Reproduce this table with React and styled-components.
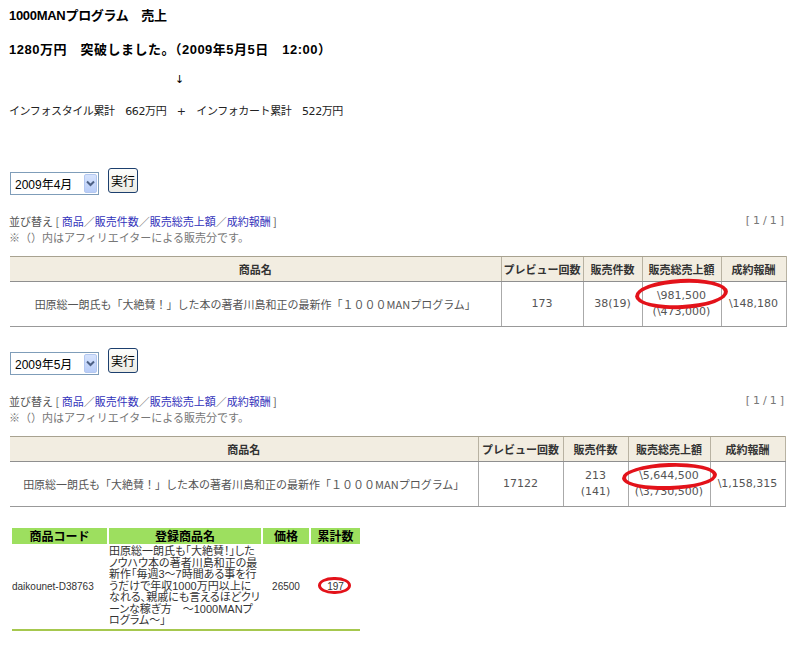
import React from "react";
import styled, { createGlobalStyle } from "styled-components";

const GlobalStyle = createGlobalStyle`
  body {
    margin: 0;
    background: #fff;
    color: #000;
    font-family: "DejaVu Sans", "Noto Sans CJK JP", sans-serif;
  }
`;

const Page = styled.div`
  width: 800px;
  padding: 8px 10px 0 9px;
  box-sizing: border-box;
`;

const Title = styled.p`
  margin: 0 0 ${(p) => p.$gap}px;
  font-family: "Liberation Sans", "Noto Sans CJK JP", sans-serif;
  font-size: 13px;
  font-weight: bold;
  line-height: 16px;
  letter-spacing: ${(p) => p.$spacing}px;
`;

const Arrow = styled.p`
  margin: 0 0 16px;
  padding-left: 166px;
  font-size: 11px;
  line-height: 16px;
`;

const Summary = styled.p`
  margin: 0;
  font-size: 11px;
  line-height: 16px;
  letter-spacing: -0.4px;
  color: #222;
`;

const Controls = styled.div`
  display: flex;
  align-items: flex-start;
  gap: 9px;
  margin: ${(p) => p.$top}px 0 0 1px;
`;

const SelectBox = styled.div`
  width: 89px;
  height: 23px;
  margin-top: 4px;
  box-sizing: border-box;
  border: 1px solid #7f9db9;
  display: flex;
  align-items: center;
  padding-left: 4px;
  font-size: 12px;
  color: #000;
  font-family: "Liberation Sans", "Noto Sans CJK JP", sans-serif;
`;

const DropButton = styled.span`
  margin-left: auto;
  width: 13px;
  height: 19px;
  margin-right: 1px;
  box-sizing: border-box;
  border: 1px solid #b4c8f0;
  border-radius: 2px;
  background: linear-gradient(#d6e3fd, #b9cdf8);
  display: flex;
  align-items: center;
  justify-content: center;
`;

const RunButton = styled.button`
  width: 30px;
  height: 25px;
  padding: 0;
  border: 1px solid #1c3f6e;
  border-radius: 3px;
  background: linear-gradient(#fdfdfb, #ecebe4);
  font-family: "Noto Sans CJK JP", sans-serif;
  font-size: 12px;
  color: #000;
`;

const SortBar = styled.div`
  display: flex;
  justify-content: space-between;
  align-items: flex-start;
  margin-top: 18px;
  padding-right: 3px;
  font-size: 11px;
  line-height: 16px;
  color: #555;
`;

const SortLinks = styled.div`
  display: flex;
  flex-direction: column;
  font-family: "Noto Sans CJK JP", sans-serif;
`;

const Link = styled.a`
  color: #3333bb;
  text-decoration: none;
`;

const Note = styled.span`
  color: #777;
`;

const Pager = styled.span`
  color: #777;
  letter-spacing: 3px;
`;

const DataTable = styled.table`
  margin: 11px 0 0 1px;
  border-collapse: collapse;
  table-layout: fixed;
  width: ${(p) => p.$width}px;
  font-size: 11px;
`;

const HeadCell = styled.th`
  height: 24px;
  padding: 0;
  background: #f2ede1;
  border-top: 1px solid #a8a290;
  border-bottom: 1px solid #8f8f8f;
  border-left: ${(p) => (p.$first ? "none" : "1px solid #b8b2a2")};
  border-right: ${(p) => (p.$last ? "1px solid #b8b2a2" : "none")};
  font-family: "Noto Sans CJK JP", sans-serif;
  font-weight: bold;
  color: #333;
  text-align: center;
`;

const BodyCell = styled.td`
  height: 44px;
  padding: 0;
  border-bottom: 1px solid #999;
  border-left: ${(p) => (p.$first ? "none" : "1px solid #aaa")};
  border-right: ${(p) => (p.$last ? "1px solid #aaa" : "none")};
  text-align: center;
  vertical-align: middle;
  line-height: 16px;
  color: #555;
  white-space: nowrap;
  font-family: ${(p) => (p.$cjk ? '"Noto Sans CJK JP", sans-serif' : "inherit")};
`;

const Ring = styled.span`
  position: relative;
  display: inline-block;
  &::after {
    content: "";
    position: absolute;
    left: -${(p) => p.$l}px;
    right: -${(p) => p.$r}px;
    top: -${(p) => p.$t}px;
    bottom: -${(p) => p.$b}px;
    border: ${(p) => p.$w}px solid #e3121a;
    border-radius: 50%;
    transform: rotate(${(p) => p.$rot}deg);
  }
`;

const CodeTable = styled.table`
  margin: 19px 0 0 1px;
  border-collapse: separate;
  border-spacing: 2px;
  table-layout: fixed;
  width: 352px;
  font-family: "Liberation Sans", "Noto Sans CJK JP", sans-serif;
  font-size: 10px;
  color: #333;
`;

const CodeHead = styled.th`
  height: 16px;
  padding: 0;
  background: #9ddf5f;
  font-family: "Noto Sans CJK JP", sans-serif;
  font-size: 12px;
  line-height: 16px;
  font-weight: bold;
  color: #000;
  text-align: center;
`;

const CodeCell = styled.td`
  padding: 0;
  text-align: ${(p) => p.$align};
  vertical-align: middle;
  font-size: ${(p) => (p.$big ? 11 : 10)}px;
  line-height: 11.5px;
  white-space: nowrap;
  font-feature-settings: "palt";
`;

const FootLine = styled.td`
  height: 2px;
  padding: 0;
  background: #a6c84e;
`;

const productName =
  "田原総一朗氏も「大絶賛！」した本の著者川島和正の最新作「１０００MANプログラム」";

const reports = [
  {
    month: "2009年4月",
    cols: [491, 82, 59, 79, 65],
    preview: "173",
    count: ["38(19)"],
    total: ["\\981,500", "(\\473,000)"],
    reward: "\\148,180",
    ring: { l: 22, r: 22, t: 9, b: 5, rot: -3 },
  },
  {
    month: "2009年5月",
    cols: [468, 85, 65, 82, 75],
    preview: "17122",
    count: ["213", "(141)"],
    total: ["\\5,644,500", "(\\3,730,500)"],
    reward: "\\1,158,315",
    ring: { l: 17, r: 18, t: 5, b: 6, rot: -2 },
  },
];

const headers = ["商品名", "プレビュー回数", "販売件数", "販売総売上額", "成約報酬"];

const descLines = [
  "田原総一朗氏も「大絶賛！」した",
  "ノウハウ本の著者川島和正の最",
  "新作「毎週3～7時間ある事を行",
  "うだけで年収1000万円以上に",
  "なれる、親戚にも言えるほどクリ",
  "ーンな稼ぎ方　～1000MANプ",
  "ログラム～」",
];

function Chevron() {
  return (
    <svg width="9" height="7" viewBox="0 0 9 7">
      <path d="M1 1.5 L4.5 5 L8 1.5" fill="none" stroke="#4d6185" strokeWidth="2" />
    </svg>
  );
}

function Lines({ items }) {
  return items.map((t, i) => (
    <React.Fragment key={i}>
      {i > 0 && <br />}
      {t}
    </React.Fragment>
  ));
}

function Report({ data, top }) {
  const width = data.cols.reduce((a, b) => a + b, 0);
  const { l, r, t, b, rot } = data.ring;
  return (
    <section>
      <Controls $top={top}>
        <SelectBox>
          {data.month}
          <DropButton>
            <Chevron />
          </DropButton>
        </SelectBox>
        <RunButton>実行</RunButton>
      </Controls>
      <SortBar>
        <SortLinks>
          <span>
            並び替え [ <Link>商品</Link>／<Link>販売件数</Link>／<Link>販売総売上額</Link>／
            <Link>成約報酬</Link> ]
          </span>
          <Note>※（）内はアフィリエイターによる販売分です。</Note>
        </SortLinks>
        <Pager>[1/1]</Pager>
      </SortBar>
      <DataTable $width={width}>
        <colgroup>
          {data.cols.map((w, i) => (
            <col key={i} style={{ width: w }} />
          ))}
        </colgroup>
        <thead>
          <tr>
            {headers.map((h, i) => (
              <HeadCell key={h} $first={i === 0} $last={i === headers.length - 1}>
                {h}
              </HeadCell>
            ))}
          </tr>
        </thead>
        <tbody>
          <tr>
            <BodyCell $first $cjk>
              {productName}
            </BodyCell>
            <BodyCell>{data.preview}</BodyCell>
            <BodyCell>
              <Lines items={data.count} />
            </BodyCell>
            <BodyCell>
              <Ring $l={l} $r={r} $t={t} $b={b} $w={4} $rot={rot}>
                {data.total[0]}
              </Ring>
              <br />
              {data.total[1]}
            </BodyCell>
            <BodyCell $last>{data.reward}</BodyCell>
          </tr>
        </tbody>
      </DataTable>
    </section>
  );
}

export default function App() {
  return (
    <>
      <GlobalStyle />
      <Page>
        <Title $gap={18} $spacing={-0.3}>
          1000MANプログラム　売上
        </Title>
        <Title $gap={14} $spacing={0.5}>
          1280万円　突破しました。（2009年5月5日　12:00）
        </Title>
        <Arrow>↓</Arrow>
        <Summary>インフォスタイル累計　662万円　+　インフォカート累計　522万円</Summary>
        <Report data={reports[0]} top={48} />
        <Report data={reports[1]} top={21} />
        <CodeTable>
          <colgroup>
            <col style={{ width: 95 }} />
            <col style={{ width: 152 }} />
            <col style={{ width: 46 }} />
            <col style={{ width: 49 }} />
          </colgroup>
          <thead>
            <tr>
              <CodeHead>商品コード</CodeHead>
              <CodeHead>登録商品名</CodeHead>
              <CodeHead>価格</CodeHead>
              <CodeHead>累計数</CodeHead>
            </tr>
          </thead>
          <tbody>
            <tr>
              <CodeCell $align="left">daikounet-D38763</CodeCell>
              <CodeCell $align="left" $big>
                <Lines items={descLines} />
              </CodeCell>
              <CodeCell $align="center">26500</CodeCell>
              <CodeCell $align="center">
                <Ring $l={9} $r={7} $t={4} $b={2} $w={3} $rot={0}>
                  197
                </Ring>
              </CodeCell>
            </tr>
            <tr>
              <FootLine colSpan={4} />
            </tr>
          </tbody>
        </CodeTable>
      </Page>
    </>
  );
}
